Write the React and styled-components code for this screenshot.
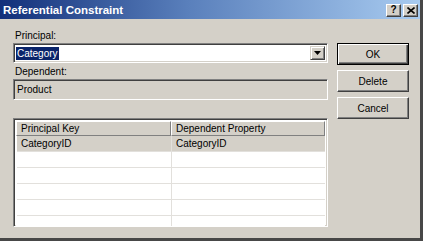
import React from "react";
import styled, { createGlobalStyle } from "styled-components";

const Global = createGlobalStyle`
  html, body { margin: 0; padding: 0; background: #ffffff; }
  body { font-family: "Liberation Sans", Arial, sans-serif; }
  * { box-sizing: border-box; }
`;

const Window = styled.div`
  width: 423px;
  height: 241px;
  background: #d4d0c8;
  border-right: 3px solid #474747;
  border-bottom: 3px solid #474747;
  font-family: "Liberation Sans", Arial, sans-serif;
  font-size: 10px;
  color: #000;
`;

const TitleBar = styled.div`
  height: 19px;
  display: flex;
  align-items: center;
  justify-content: space-between;
  padding: 0 2px 0 3px;
  background: linear-gradient(to right, #12307a 0%, #5a80bc 45%, #a8cbf0 100%);
`;

const Title = styled.span`
  color: #fff;
  font-weight: bold;
  font-size: 11.5px;
`;

const Caps = styled.div`
  display: flex;
  gap: 2px;
  padding-top: 1px;
`;

const CapButton = styled.div`
  width: 15px;
  height: 13px;
  background: #d4d0c8;
  border: 1px solid;
  border-color: #fff #404040 #404040 #fff;
  box-shadow: inset -1px -1px #808080;
  display: flex;
  align-items: center;
  justify-content: center;
  font-weight: bold;
  font-size: 10px;
  line-height: 1;
  color: #000;
`;

const Body = styled.div`
  display: grid;
  grid-template-columns: 315px 72px;
  column-gap: 9px;
  padding: 11px 0 0 13px;
`;

const LeftCol = styled.div`
  display: flex;
  flex-direction: column;
`;

const Label = styled.div`
  height: 13px;
  line-height: 12px;
  padding-left: 2px;
  margin-top: ${(p) => p.$mt || 0}px;
`;

const Sunken = styled.div`
  border: 1px solid;
  border-color: #808080 #fff #fff #808080;
  box-shadow: inset 1px 1px #404040, inset -1px -1px #d4d0c8;
`;

const Combo = styled(Sunken)`
  height: 20px;
  background: #fff;
  display: flex;
  align-items: stretch;
  padding: 2px;
`;

const ComboText = styled.div`
  flex: 1;
  display: flex;
  align-items: center;
`;

const Selected = styled.span`
  background: #0a246a;
  color: #fff;
  line-height: 13px;
  padding: 0 1px;
`;

const DropButton = styled.div`
  width: 15px;
  background: #d4d0c8;
  border: 1px solid;
  border-color: #d4d0c8 #404040 #404040 #d4d0c8;
  box-shadow: inset 1px 1px #fff, inset -1px -1px #808080;
  display: flex;
  align-items: center;
  justify-content: center;
`;

const Field = styled(Sunken)`
  height: 21px;
  background: #d4d0c8;
  display: flex;
  align-items: center;
  padding-left: 3px;
`;

const Table = styled(Sunken)`
  margin-top: 18px;
  height: 109px;
  background: #fff;
  overflow: hidden;
  padding: 2px;
`;

const HeaderRow = styled.div`
  display: grid;
  grid-template-columns: 155px 154px 1fr;
  height: 15px;
  background: #d4d0c8;
`;

const HeaderCell = styled.div`
  border: 1px solid;
  border-color: #fff #808080 #808080 #fff;
  padding-left: 4px;
  line-height: 13px;
  white-space: nowrap;
  overflow: hidden;
`;

const Row = styled.div`
  display: grid;
  grid-template-columns: 155px 1fr;
  height: 16px;
  background: ${(p) => (p.$active ? "#d4d0c8" : "#fff")};
  border-left: 1px solid #fff;
`;

const Cell = styled.div`
  border-bottom: 1px solid #e2e0dc;
  border-right: ${(p) => (p.$last ? "none" : "1px solid #e2e0dc")};
  padding-left: 4px;
  line-height: 15px;
  white-space: nowrap;
`;

const RightCol = styled.div`
  display: flex;
  flex-direction: column;
  gap: 5px;
  padding-top: 13px;
`;

const Button = styled.div`
  height: 22px;
  display: flex;
  align-items: center;
  justify-content: center;
  background: #d4d0c8;
  border: 1px solid;
  border-color: ${(p) => (p.$default ? "#000" : "#fff #404040 #404040 #fff")};
  box-shadow: ${(p) =>
    p.$default
      ? "inset 1px 1px #fff, inset -1px -1px #404040, inset -2px -2px #808080"
      : "inset -1px -1px #808080"};
  font-size: 10px;
`;

const rows = [
  ["CategoryID", "CategoryID"],
  ["", ""],
  ["", ""],
  ["", ""],
  ["", ""],
  ["", ""],
];

export default function App() {
  return (
    <>
      <Global />
      <Window>
        <TitleBar>
          <Title>Referential Constraint</Title>
          <Caps>
            <CapButton>?</CapButton>
            <CapButton>
              <svg width="8" height="7" viewBox="0 0 8 7">
                <path d="M0.5 0.5 L7.5 6.5 M7.5 0.5 L0.5 6.5" stroke="#000" strokeWidth="1.6" />
              </svg>
            </CapButton>
          </Caps>
        </TitleBar>
        <Body>
          <LeftCol>
            <Label>Principal:</Label>
            <Combo>
              <ComboText>
                <Selected>Category</Selected>
              </ComboText>
              <DropButton>
                <svg width="7" height="4" viewBox="0 0 7 4">
                  <path d="M0 0 H7 L3.5 4 Z" fill="#000" />
                </svg>
              </DropButton>
            </Combo>
            <Label $mt={3}>Dependent:</Label>
            <Field>Product</Field>
            <Table>
              <HeaderRow>
                <HeaderCell>Principal Key</HeaderCell>
                <HeaderCell>Dependent Property</HeaderCell>
                <div />
              </HeaderRow>
              {rows.map((r, i) => (
                <Row key={i} $active={i === 0}>
                  <Cell>{r[0]}</Cell>
                  <Cell $last>{r[1]}</Cell>
                </Row>
              ))}
            </Table>
          </LeftCol>
          <RightCol>
            <Button $default>OK</Button>
            <Button>Delete</Button>
            <Button>Cancel</Button>
          </RightCol>
        </Body>
      </Window>
    </>
  );
}
